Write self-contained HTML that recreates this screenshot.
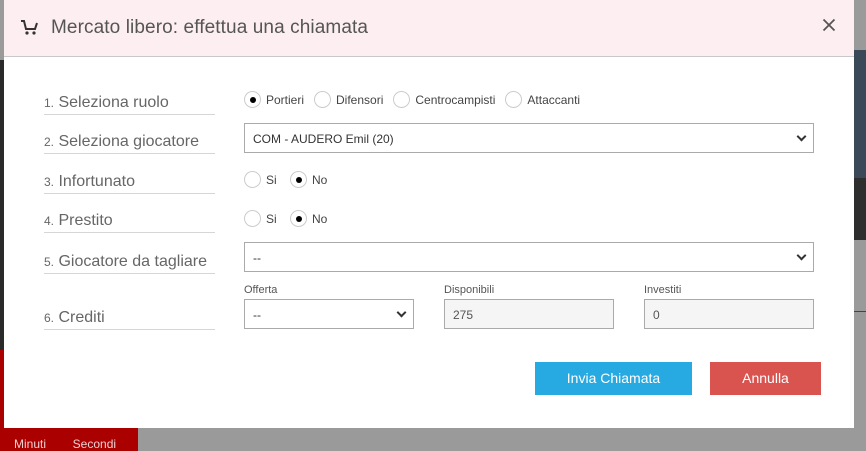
<!DOCTYPE html>
<html><head><style>
*{box-sizing:border-box;margin:0;padding:0}
body{width:866px;height:451px;overflow:hidden;background:#9a9a9a;font-family:"Liberation Sans",sans-serif;position:relative}
.a{position:absolute}
.modal{left:4px;top:0;width:850px;height:428px;background:#fff}
.hd{left:0;top:0;width:850px;height:57px;background:#fdeef1;border-bottom:1px solid #c8c8c8}
.title{left:47px;top:17px;font-size:19px;color:#555;letter-spacing:0.1px}
.lbl{left:40px;width:171px;font-size:16px;color:#666;border-bottom:1px solid #d6d6d6;padding-bottom:2px}
.lbl small{font-size:12px}
.r{font-size:12px;color:#444;display:flex;align-items:center}
.rb{width:17px;height:17px;border:1px solid #ccc;border-radius:50%;margin-right:5px;display:inline-flex;align-items:center;justify-content:center}
.rb.on:after{content:"";width:6px;height:6px;background:#000;border-radius:50%}
.sel{border:1px solid #aaa;height:30px;font-size:12px;color:#333;padding:8px 8px;background:#fff}
.sel:after{content:"";position:absolute;right:8px;top:9px;width:5px;height:5px;border-right:2px solid #333;border-bottom:2px solid #333;transform:rotate(45deg)}
.inp{border:1px solid #aaa;height:30px;font-size:12px;color:#555;padding:8px 8px;background:#f5f5f5}
.sm{font-size:11px;color:#555}
.btn{color:#fff;font-size:14px;text-align:center;line-height:33px;height:33px}
</style></head><body>
<div class="a" style="left:854px;top:50px;width:12px;height:128px;background:#3b4858"></div>
<div class="a" style="left:854px;top:178px;width:12px;height:62px;background:#2e2e2e"></div>
<div class="a" style="left:854px;top:311px;width:12px;height:1px;background:#444"></div>
<div class="a" style="left:0;top:60px;width:4px;height:290px;background:#2a2a2a"></div>
<div class="a" style="left:0;top:350px;width:4px;height:80px;background:#a00"></div>
<div class="a" style="left:0;top:428px;width:138px;height:23px;background:#a00;color:#f0d0d0;font-size:12px;padding:9px 0 0 14px">Minuti&nbsp;&nbsp;&nbsp;&nbsp;&nbsp;&nbsp;&nbsp;&nbsp;Secondi</div>
<div class="a modal">
 <div class="a hd">
  <svg class="a" style="left:16px;top:19px" width="18" height="16" viewBox="0 0 18 16"><path d="M1 2h3l2 8h9l2-6" fill="none" stroke="#333" stroke-width="2"/><circle cx="7" cy="14" r="1.6" fill="#333"/><circle cx="14" cy="14" r="1.6" fill="#333"/></svg>
  <div class="a title">Mercato libero: effettua una chiamata</div>
  <svg class="a" style="left:818px;top:18px" width="14" height="14" viewBox="0 0 14 14"><path d="M1.5 1.5L12.5 12.5M12.5 1.5L1.5 12.5" stroke="#555" stroke-width="1.8"/></svg>
 </div>
 <div class="a lbl" style="top:94px"><small>1.</small> Seleziona ruolo</div>
 <div class="a lbl" style="top:133px"><small>2.</small> Seleziona giocatore</div>
 <div class="a lbl" style="top:173px"><small>3.</small> Infortunato</div>
 <div class="a lbl" style="top:212px"><small>4.</small> Prestito</div>
 <div class="a lbl" style="top:253px"><small>5.</small> Giocatore da tagliare</div>
 <div class="a lbl" style="top:309px"><small>6.</small> Crediti</div>
 <div class="a r" style="left:240px;top:91px"><span class="rb on"></span>Portieri&nbsp;&nbsp;&nbsp;<span class="rb"></span>Difensori&nbsp;&nbsp;&nbsp;<span class="rb"></span>Centrocampisti&nbsp;&nbsp;&nbsp;<span class="rb"></span>Attaccanti</div>
 <div class="a sel" style="left:240px;top:123px;width:570px">COM - AUDERO Emil (20)</div>
 <div class="a r" style="left:240px;top:171px"><span class="rb"></span>Si&nbsp;&nbsp;&nbsp;&nbsp;<span class="rb on"></span>No</div>
 <div class="a r" style="left:240px;top:210px"><span class="rb"></span>Si&nbsp;&nbsp;&nbsp;&nbsp;<span class="rb on"></span>No</div>
 <div class="a sel" style="left:240px;top:242px;width:570px">--</div>
 <div class="a sm" style="left:240px;top:284px">Offerta</div>
 <div class="a sel" style="left:240px;top:299px;width:170px">--</div>
 <div class="a sm" style="left:440px;top:284px">Disponibili</div>
 <div class="a inp" style="left:440px;top:299px;width:170px">275</div>
 <div class="a sm" style="left:640px;top:284px">Investiti</div>
 <div class="a inp" style="left:640px;top:299px;width:170px">0</div>
 <div class="a btn" style="left:531px;top:362px;width:157px;background:#27a9e1">Invia Chiamata</div>
 <div class="a btn" style="left:706px;top:362px;width:111px;background:#d9534f">Annulla</div>
</div>
</body></html>
